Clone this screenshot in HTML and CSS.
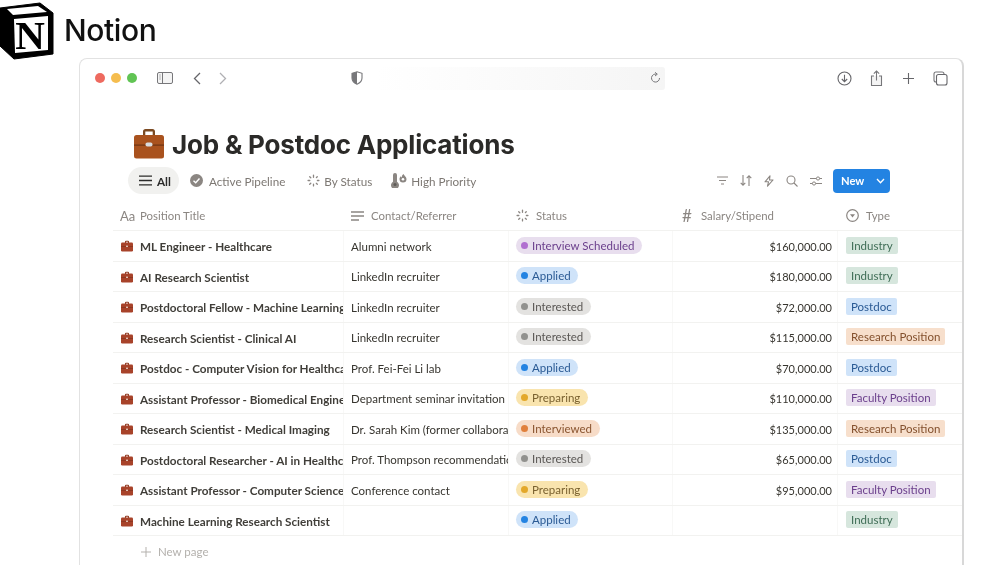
FILE: index.html
```html
<!DOCTYPE html>
<html lang="en">
<head>
<meta charset="utf-8">
<title>Job &amp; Postdoc Applications</title>
<link rel="stylesheet" href="styles.css">
</head>
<body>
<svg class="defs" width="0" height="0" aria-hidden="true">
  <symbol id="case" viewBox="0 0 12 12">
    <path d="M4 3V1.6C4 1 4.4.7 5 .7h2c.6 0 1 .3 1 .9V3H7V1.7H5V3z" fill="#8f3a20"/>
    <rect x="0" y="2.6" width="12" height="8.9" rx="1.2" fill="#a8432a"/>
    <rect x="0" y="6.1" width="12" height=".6" fill="#7c2f1b"/>
    <rect x="5" y="5.6" width="2" height="1.4" rx=".5" fill="#e3c6b8"/>
  </symbol>
  <symbol id="burst" viewBox="0 0 12 12">
    <g stroke="currentColor" stroke-width="1.2" stroke-linecap="round" fill="none">
      <path d="M6 1v2M6 9.4V11M1 6h1.600M9.600 6H11M2.500 2.500l1 1M8.600 8.600l.9.9M2.500 9.500l1-1M8.700 3.300l.8-.8"/>
    </g>
  </symbol>
</svg>

<header class="brand">
  <svg class="brand-logo" width="54" height="60" viewBox="0 0 54 60" aria-hidden="true">
    <path d="M0 8 40 3 53 13V54L14 59 0 46Z" fill="#000" stroke="#000" stroke-linejoin="round"/>
    <path d="M7 9 38 6 47 12 13 15Z" fill="#fff"/>
    <path d="M14 19 48 16V50L15 53Z" fill="#fff"/>
    <text x="30" y="49" class="brand-n">N</text>
  </svg>
  <span class="brand-name">Notion</span>
</header>

<main class="window">
  <div class="chrome">
    <div class="lights"><i class="light red"></i><i class="light amber"></i><i class="light green"></i></div>
    <svg class="ic-sidebar" width="16" height="12" viewBox="0 0 16 12" aria-hidden="true">
      <rect x=".5" y=".5" width="15" height="11" rx="1.5" fill="#f4f4f4" stroke="#77777a"/>
      <path d="M5.5 .5V11.5" stroke="#77777a"/>
      <path d="M2.5 3h1M2.5 5h1M2.5 7h1" stroke="#77777a"/>
    </svg>
    <svg class="ic-back" width="8" height="13" viewBox="0 0 8 13" aria-hidden="true"><path d="M7 1 1.5 6.5 7 12" fill="none" stroke="#66666a" stroke-width="1.3"/></svg>
    <svg class="ic-forward" width="8" height="13" viewBox="0 0 8 13" aria-hidden="true"><path d="M1 1 6.5 6.5 1 12" fill="none" stroke="#b0b0b3" stroke-width="1.3"/></svg>
    <svg class="ic-shield" width="12" height="14" viewBox="0 0 12 14" aria-hidden="true">
      <path d="M6 .8 11 2.3V7c0 3-2.2 5-5 6.2C3.200 12 1 10 1 7V2.300Z" fill="#fff" stroke="#77777a" stroke-width="1.100"/>
      <path d="M6 .8V13.200C3.200 12 1 10 1 7V2.300Z" fill="#77777a"/>
    </svg>
    <div class="address">
      <svg width="11" height="12" viewBox="0 0 11 12" aria-hidden="true">
        <path d="M6.500 2.200A4 4 0 1 0 9.500 6" fill="none" stroke="#77777a"/>
        <path d="M5 .3 7.300 2.200 5 4" fill="none" stroke="#77777a"/>
      </svg>
    </div>
    <div class="chrome-actions">
      <svg width="15" height="15" viewBox="0 0 15 15" aria-hidden="true"><circle cx="7.500" cy="7.500" r="6.500" fill="none" stroke="#66666a" stroke-width="1.100"/><path d="M7.500 3.800V10.500M4.800 8 7.500 10.700 10.200 8" fill="none" stroke="#66666a" stroke-width="1.100"/></svg>
      <svg width="13" height="17" viewBox="0 0 13 17" aria-hidden="true"><path d="M4 6H1.500V15.500H11.500V6H9" fill="#f4f4f4" stroke="#77777a" stroke-width="1.100"/><path d="M6.500 10.500V1.200M3.800 3.700 6.500 1 9.200 3.700" fill="none" stroke="#77777a" stroke-width="1.100"/></svg>
      <svg width="13" height="13" viewBox="0 0 13 13" aria-hidden="true"><path d="M6.500 1V12M1 6.500H12" stroke="#66666a" stroke-width="1.100"/></svg>
      <svg width="15" height="15" viewBox="0 0 15 15" aria-hidden="true"><rect x="1" y="1" width="10" height="10" rx="2" fill="none" stroke="#77777a" stroke-width="1.100"/><rect x="3.500" y="3.500" width="10.500" height="10.500" rx="2" fill="#fff" stroke="#66666a" stroke-width="1.100"/></svg>
    </div>
  </div>

  <section class="page">
    <h1 class="title">
      <svg width="30" height="31" viewBox="0 0 30 31" aria-hidden="true">
        <path d="M9 8V3.500C9 2 10 1 11.500 1h7C20 1 21 2 21 3.500V8h-2.300V3.500h-7.400V8z" fill="#7b4a22"/>
        <rect x="0" y="7" width="30" height="23.500" rx="2.500" fill="#a9521e"/>
        <rect x="0" y="16.500" width="30" height="1.200" fill="#6f3412"/>
        <rect x="11.500" y="14.500" width="7" height="4" rx="1.800" fill="#d9dcdf"/>
      </svg>
      <span class="title-text">Job &amp; Postdoc Applications</span>
    </h1>

    <div class="viewbar">
      <nav class="tabs">
        <span class="tab tab-active">
          <svg width="13" height="11" viewBox="0 0 13 11" aria-hidden="true"><path d="M0 1.200H13M0 5.500H13M0 9.800H13" stroke="#2c2c2b" stroke-width="1.300"/></svg>All
        </span>
        <span class="tab tab-pipeline">
          <svg width="13" height="13" viewBox="0 0 13 13" aria-hidden="true"><circle cx="6.500" cy="6.500" r="6.500" fill="#8b8682"/><path d="M3.500 6.700 5.700 8.800 9.500 4.500" fill="none" stroke="#fff" stroke-width="1.400"/></svg>Active Pipeline
        </span>
        <span class="tab tab-status">
          <svg width="13" height="13"><use href="#burst"/></svg>By Status
        </span>
        <span class="tab tab-priority">
          <svg width="16" height="15" viewBox="0 0 16 15" aria-hidden="true">
            <path d="M2 2a2 2 0 0 1 4 0v6.700a4 4 0 1 1-4 0z" fill="#8b8682"/>
            <circle cx="4" cy="11.500" r="1.500" fill="#5f5b58"/>
            <path d="M12.500 1c.3 1.500 3 2.500 3 5a3.500 3.500 0 0 1-7 0c0-1.300.7-2.200 1.300-2.800.2.700.5 1 1 1.200C10.700 3 11.300 1.800 12.500 1z" fill="#8b8682"/>
            <circle cx="12" cy="6.300" r="1.300" fill="#fff"/>
          </svg>High Priority
        </span>
      </nav>
      <div class="tools">
        <svg width="11" height="9" viewBox="0 0 11 9" aria-hidden="true"><path d="M0 1H11M2 4.500H9M4 8H7" stroke="#8b8682" stroke-width="1.100"/></svg>
        <svg width="12" height="11" viewBox="0 0 12 11" aria-hidden="true"><path d="M3 0V10M.7 7.800 3 10.200 5.300 7.800M9 11V1M6.700 3.200 9 .8 11.300 3.200" fill="none" stroke="#8b8682" stroke-width="1.100"/></svg>
        <svg width="10" height="12" viewBox="0 0 10 12" aria-hidden="true"><path d="M6 .8 1 6.800H4.500L3.500 11.200 9 5H5.500Z" fill="none" stroke="#8b8682" stroke-width="1.100" stroke-linejoin="round"/></svg>
        <svg width="12" height="12" viewBox="0 0 12 12" aria-hidden="true"><circle cx="5" cy="5" r="4" fill="none" stroke="#8b8682" stroke-width="1.100"/><path d="M8 8 11.500 11.500" stroke="#8b8682" stroke-width="1.100"/></svg>
        <svg width="12" height="10" viewBox="0 0 12 10" aria-hidden="true"><path d="M0 2.500H12M0 7.500H12" stroke="#8b8682" stroke-width="1"/><circle cx="8" cy="2.500" r="1.600" fill="#fff" stroke="#8b8682"/><circle cx="4" cy="7.500" r="1.600" fill="#fff" stroke="#8b8682"/></svg>
        <span class="new-btn"><span class="new-label">New</span>
          <svg width="9" height="6" viewBox="0 0 9 6" aria-hidden="true"><path d="M1 1 4.500 4.800 8 1" fill="none" stroke="#fff" stroke-width="1.300"/></svg>
        </span>
      </div>
    </div>

    <div class="table">
      <div class="row head">
        <div class="cell"><span class="aa">Aa</span><span>Position Title</span></div>
        <div class="cell"><svg width="13" height="10" viewBox="0 0 13 10" aria-hidden="true"><path d="M0 1H13M0 5H13M0 9H8" stroke="#8b8682" stroke-width="1.300"/></svg><span>Contact/Referrer</span></div>
        <div class="cell cell-status"><svg width="13" height="13"><use href="#burst"/></svg><span>Status</span></div>
        <div class="cell cell-salary"><span class="hash">#</span><span>Salary/Stipend</span></div>
        <div class="cell cell-type"><svg width="13" height="13" viewBox="0 0 13 13" aria-hidden="true"><circle cx="6.500" cy="6.500" r="5.800" fill="none" stroke="#8b8682" stroke-width="1.200"/><path d="M4 5.200H9L6.500 8.500Z" fill="#8b8682"/></svg><span>Type</span></div>
      </div>

      <div class="row">
        <div class="cell name"><svg class="case" width="12" height="12"><use href="#case"/></svg><span class="clip">ML Engineer - Healthcare</span></div>
        <div class="cell"><span class="clip">Alumni network</span></div>
        <div class="cell cell-status"><span class="pill purple"><i></i>Interview Scheduled</span></div>
        <div class="cell salary">$160,000.00</div>
        <div class="cell cell-type"><span class="tag green">Industry</span></div>
      </div>
      <div class="row">
        <div class="cell name"><svg class="case" width="12" height="12"><use href="#case"/></svg><span class="clip">AI Research Scientist</span></div>
        <div class="cell"><span class="clip">LinkedIn recruiter</span></div>
        <div class="cell cell-status"><span class="pill blue"><i></i>Applied</span></div>
        <div class="cell salary">$180,000.00</div>
        <div class="cell cell-type"><span class="tag green">Industry</span></div>
      </div>
      <div class="row">
        <div class="cell name"><svg class="case" width="12" height="12"><use href="#case"/></svg><span class="clip">Postdoctoral Fellow - Machine Learning</span></div>
        <div class="cell"><span class="clip">LinkedIn recruiter</span></div>
        <div class="cell cell-status"><span class="pill gray"><i></i>Interested</span></div>
        <div class="cell salary">$72,000.00</div>
        <div class="cell cell-type"><span class="tag blue">Postdoc</span></div>
      </div>
      <div class="row">
        <div class="cell name"><svg class="case" width="12" height="12"><use href="#case"/></svg><span class="clip">Research Scientist - Clinical AI</span></div>
        <div class="cell"><span class="clip">LinkedIn recruiter</span></div>
        <div class="cell cell-status"><span class="pill gray"><i></i>Interested</span></div>
        <div class="cell salary">$115,000.00</div>
        <div class="cell cell-type"><span class="tag orange">Research Position</span></div>
      </div>
      <div class="row">
        <div class="cell name"><svg class="case" width="12" height="12"><use href="#case"/></svg><span class="clip">Postdoc - Computer Vision for Healthcare</span></div>
        <div class="cell"><span class="clip">Prof. Fei-Fei Li lab</span></div>
        <div class="cell cell-status"><span class="pill blue"><i></i>Applied</span></div>
        <div class="cell salary">$70,000.00</div>
        <div class="cell cell-type"><span class="tag blue">Postdoc</span></div>
      </div>
      <div class="row">
        <div class="cell name"><svg class="case" width="12" height="12"><use href="#case"/></svg><span class="clip">Assistant Professor - Biomedical Engineering</span></div>
        <div class="cell"><span class="clip">Department seminar invitation</span></div>
        <div class="cell cell-status"><span class="pill yellow"><i></i>Preparing</span></div>
        <div class="cell salary">$110,000.00</div>
        <div class="cell cell-type"><span class="tag purple">Faculty Position</span></div>
      </div>
      <div class="row">
        <div class="cell name"><svg class="case" width="12" height="12"><use href="#case"/></svg><span class="clip">Research Scientist - Medical Imaging</span></div>
        <div class="cell"><span class="clip">Dr. Sarah Kim (former collaborator)</span></div>
        <div class="cell cell-status"><span class="pill orange"><i></i>Interviewed</span></div>
        <div class="cell salary">$135,000.00</div>
        <div class="cell cell-type"><span class="tag orange">Research Position</span></div>
      </div>
      <div class="row">
        <div class="cell name"><svg class="case" width="12" height="12"><use href="#case"/></svg><span class="clip">Postdoctoral Researcher - AI in Healthcare</span></div>
        <div class="cell"><span class="clip">Prof. Thompson recommendation</span></div>
        <div class="cell cell-status"><span class="pill gray"><i></i>Interested</span></div>
        <div class="cell salary">$65,000.00</div>
        <div class="cell cell-type"><span class="tag blue">Postdoc</span></div>
      </div>
      <div class="row">
        <div class="cell name"><svg class="case" width="12" height="12"><use href="#case"/></svg><span class="clip">Assistant Professor - Computer Science</span></div>
        <div class="cell"><span class="clip">Conference contact</span></div>
        <div class="cell cell-status"><span class="pill yellow"><i></i>Preparing</span></div>
        <div class="cell salary">$95,000.00</div>
        <div class="cell cell-type"><span class="tag purple">Faculty Position</span></div>
      </div>
      <div class="row">
        <div class="cell name"><svg class="case" width="12" height="12"><use href="#case"/></svg><span class="clip">Machine Learning Research Scientist</span></div>
        <div class="cell"></div>
        <div class="cell cell-status"><span class="pill blue"><i></i>Applied</span></div>
        <div class="cell salary"></div>
        <div class="cell cell-type"><span class="tag green">Industry</span></div>
      </div>

      <div class="new-page">
        <svg width="10" height="10" viewBox="0 0 10 10" aria-hidden="true"><path d="M5 0V10M0 5H10" stroke="#b4b1ad" stroke-width="1"/></svg>New page
      </div>
    </div>
  </section>
</main>
</body>
</html>
```

FILE: styles.css
```css
html, body {
  margin: 0;
  height: 565px;
  overflow: hidden;
  background: #fff;
}
body {
  font-family: Lato, Inter, "Noto Sans", sans-serif;
  color: #37352f;
  font-size: 11.5px;
  filter: blur(0.35px);
}
.defs { position: absolute; }

/* brand */
.brand {
  height: 58px;
  display: flex;
  align-items: flex-start;
}
.brand-logo { display: block; flex: none; }
.brand-n {
  font-family: "Liberation Serif", serif;
  font-weight: 700;
  font-size: 41px;
  text-anchor: middle;
  fill: #000;
}
.brand-name {
  font-family: Inter, sans-serif;
  margin: 9px 0 0 10px;
  font-size: 30px;
  line-height: 42px;
  font-weight: 500;
  letter-spacing: -0.4px;
  color: #111;
}

/* window */
.window {
  margin-left: 79px;
  width: 885px;
  height: 540px;
  box-sizing: border-box;
  border: 1px solid #e2e2e2;
  border-right: 2px solid #d8d8d8;
  border-radius: 8px 8px 0 0;
  background: #fff;
}
.chrome {
  height: 38px;
  display: flex;
  align-items: center;
  padding-left: 15px;
}
.lights { display: flex; gap: 6px; }
.light { width: 10px; height: 10px; border-radius: 50%; display: block; }
.red { background: #ee6a5f; }
.amber { background: #f5bd4f; }
.green { background: #61c454; }
.ic-sidebar { margin-left: 20px; }
.ic-back { margin-left: 20px; }
.ic-forward { margin-left: 18px; }
.ic-shield { margin-left: 124px; }
.address {
  margin-left: 14px;
  width: 288px;
  height: 23px;
  box-sizing: border-box;
  padding-right: 4px;
  border-radius: 3px;
  background: linear-gradient(90deg, #fff 0%, #f5f5f5 100%);
  display: flex;
  align-items: center;
  justify-content: flex-end;
}
.chrome-actions {
  width: 111px;
  margin-left: 172px;
  display: flex;
  align-items: center;
  justify-content: space-between;
}

/* page */
.page { margin: 0 0 0 33px; }
.title {
  font-family: Inter, sans-serif;
  margin: 31px 0 0 21px;
  height: 30px;
  display: flex;
  align-items: center;
  gap: 8px;
  font-size: 26px;
  font-weight: 700;
  letter-spacing: -0.2px;
  color: #2b2a28;
}
.title-text { margin-top: 2px; }
.viewbar {
  margin-top: 9px;
  height: 27px;
  padding-left: 15px;
  display: flex;
  align-items: center;
  justify-content: space-between;
}
.tabs { display: flex; align-items: center; }
.tab {
  height: 27px;
  display: flex;
  align-items: center;
  gap: 6px;
  color: #7d7873;
  font-size: 11.7px;
}
.tab-active {
  width: 51px;
  box-sizing: border-box;
  padding-left: 11px;
  border-radius: 14px;
  background: #f1f1ef;
  color: #2c2c2b;
  font-weight: 700;
  gap: 5px;
}
.tab-pipeline { margin-left: 11px; }
.tab-status { margin-left: 22px; gap: 4px; }
.tab-priority { gap: 4px; margin-left: 19px; }
.tab svg { color: #8b8682; flex: none; }
.tools {
  display: flex;
  align-items: center;
  gap: 12px;
  margin-right: 72px;
}
.new-btn {
  width: 57px;
  height: 24px;
  box-sizing: border-box;
  padding: 0 5px 0 8px;
  margin-left: -1px;
  border-radius: 4px;
  background: #2383e2;
  color: #fff;
  font-size: 11.2px;
  font-weight: 700;
  display: flex;
  align-items: center;
  justify-content: space-between;
}

/* table */
.table { margin-top: 6px; width: 849px; }
.row {
  display: grid;
  grid-template-columns: 231px 165px 164px 165px 124px;
  height: 30.5px;
  border-bottom: 1px solid #f2f2f0;
  box-sizing: border-box;
}
.head { height: 31px; color: #8b8682; font-size: 11.4px; }
.cell {
  display: flex;
  align-items: center;
  min-width: 0;
  overflow: hidden;
  white-space: nowrap;
  padding: 1px 0 0 7px;
  border-right: 1px solid #f8f8f7;
  box-sizing: border-box;
}
.cell:last-child { border-right: 0; }
.head .cell { border-right: 0; gap: 7px; }
.head .aa {
  font-size: 13px;
  width: 13px;
}
.hash { font-size: 17px; line-height: 1; width: 12px; margin-left: 2px; }
.clip { overflow: hidden; white-space: nowrap; min-width: 0; }
.name { font-size: 11.7px; font-weight: 700; color: #403e39; padding-left: 8px; gap: 7px; }
.case { flex: none; }
.cell-type { padding-left: 8px; }
.salary { justify-content: flex-end; padding: 1px 5px 0 0; color: #37352f; font-size: 11px; }

.pill, .tag {
  display: inline-flex;
  align-items: center;
  height: 17px;
  font-size: 11.5px;
  margin-top: -2px;
}
.pill { padding: 0 7.5px 0 5px; border-radius: 9px; }
.pill i { width: 7px; height: 7px; border-radius: 50%; margin-right: 4px; flex: none; }
.tag { padding: 0 5px; border-radius: 2px; }

.pill.purple { background: #e8deee; color: #6b3f8c; }
.pill.purple i { background: #b06fd0; }
.pill.blue { background: #cfe3f9; color: #2a5a94; }
.pill.blue i { background: #2383e2; }
.pill.gray { background: #e3e2e0; color: #5a5754; }
.pill.gray i { background: #91918e; }
.pill.yellow { background: #f9e4ae; color: #7a6230; }
.pill.yellow i { background: #e3a82a; }
.pill.orange { background: #f7dcc8; color: #8a5530; }
.pill.orange i { background: #e0803c; }
.tag.green { background: #d6e6dd; color: #3f6d56; }
.tag.blue { background: #cfe3f9; color: #2a5a94; }
.tag.orange { background: #f7dfcc; color: #83502d; }
.tag.purple { background: #e8deee; color: #6b3f8c; }

.new-page {
  height: 31px;
  padding-left: 28px;
  display: flex;
  align-items: center;
  gap: 7px;
  color: #b4b1ad;
  font-size: 11.5px;
}
```
